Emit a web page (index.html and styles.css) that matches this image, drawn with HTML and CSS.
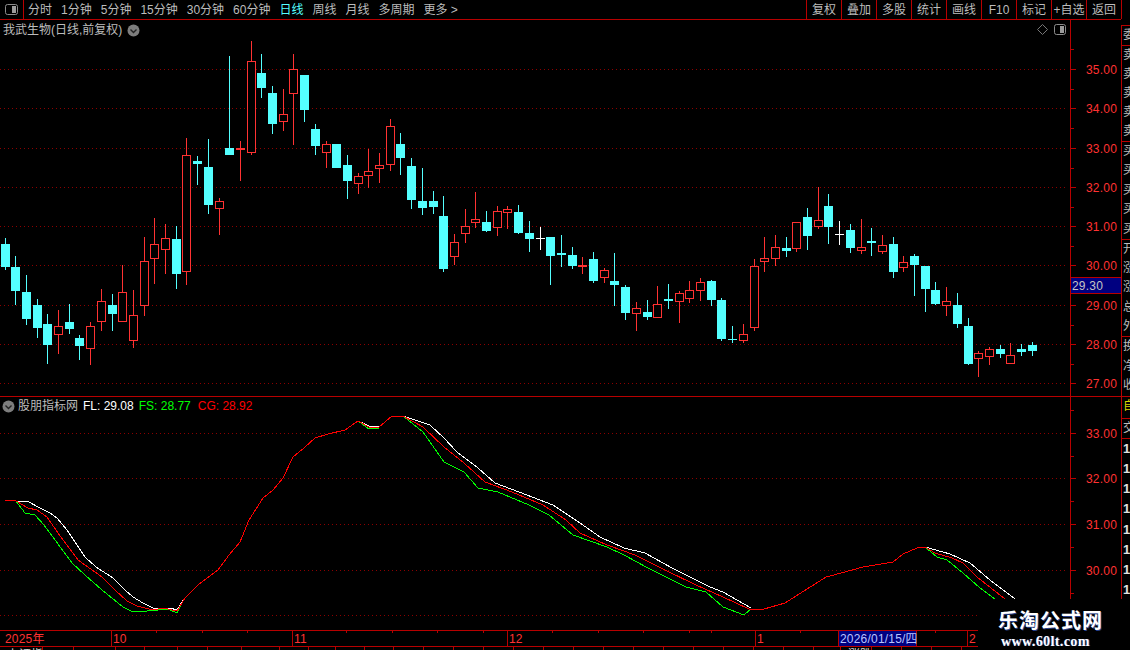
FILE: index.html
```html
<!DOCTYPE html>
<html lang="zh-CN">
<head>
<meta charset="utf-8">
<title>我武生物</title>
<link rel="stylesheet" href="styles.css">
</head>
<body>
<div class="app">
  <div class="main">
    <header class="topbar">
      <div class="layout-btn">
        <svg class="layout-icon" width="13" height="12" viewBox="0 0 13 12"><rect x="0.5" y="0.5" width="12" height="10" rx="2" fill="none" stroke="#8c8c8c"/><rect x="7" y="2" width="4" height="7" fill="#9c9c9c"/></svg>
      </div>
      <nav class="periods">
        <span>分时</span><span>1分钟</span><span>5分钟</span><span>15分钟</span><span>30分钟</span><span>60分钟</span><span class="on">日线</span><span>周线</span><span>月线</span><span>多周期</span><span>更多 &gt;</span>
      </nav>
      <nav class="tools">
        <span>复权</span><span>叠加</span><span>多股</span><span>统计</span><span>画线</span><span>F10</span><span>标记</span><span>+自选</span><span>返回</span>
      </nav>
    </header>

    <section class="pane pane-kline">
      <svg id="kline" class="plot" width="1121" height="376" viewBox="0 20 1121 376"></svg>
      <div class="pane-title">
        <span>我武生物(日线,前复权)</span>
        <svg width="13" height="13" viewBox="0 0 13 13"><circle cx="6.5" cy="6.5" r="6" fill="#7d7d7d"/><path d="M3.5 5.5 6.5 8.5 9.5 5.5" fill="none" stroke="#222" stroke-width="1.4"/></svg>
      </div>
      <div class="pane-icons">
        <svg width="11" height="11" viewBox="0 0 11 11"><path d="M5.5 .5 10.5 5.5 5.5 10.5 .5 5.5Z" fill="none" stroke="#777"/></svg>
        <svg width="13" height="12" viewBox="0 0 13 12"><rect x="0.5" y="0.5" width="11" height="10" rx="2" fill="none" stroke="#8c8c8c"/><rect x="6" y="2" width="4" height="7" fill="#9c9c9c"/></svg>
      </div>
    </section>

    <section class="pane pane-indicator">
      <svg id="indicator" class="plot" width="1121" height="233" viewBox="0 397 1121 233"></svg>
      <div class="pane-title ind-title">
        <svg width="13" height="13" viewBox="0 0 13 13"><circle cx="6.5" cy="6.5" r="6" fill="#7d7d7d"/><path d="M3.5 5.5 6.5 8.5 9.5 5.5" fill="none" stroke="#222" stroke-width="1.4"/></svg>
        <span class="ind-name">股朋指标网</span>
        <span class="fl">FL: 29.08</span>
        <span class="fs">FS: 28.77</span>
        <span class="cg">CG: 28.92</span>
      </div>
    </section>

    <svg id="timeaxis" class="plot" width="1121" height="17" viewBox="0 630 1121 17"></svg>
    <div id="statusbar" class="statusbar"></div>
  </div>

  <aside class="side">
    <div class="group g-top"><span>委</span></div>
    <div class="group g-five"><span>卖</span><span>卖</span><span>卖</span><span>卖</span><span>卖</span></div>
    <div class="group g-five g-buy"><span>买</span><span>买</span><span>买</span><span>买</span><span>买</span></div>
    <div class="group g-five g-quote"><span>开</span><span>涨</span><span>涨</span><span>总</span><span>外</span></div>
    <div class="group g-three"><span>换</span><span>净</span><span>收</span></div>
    <div class="group g-self"><span>自</span></div>
    <div class="group g-top g-trade"><span>交</span></div>
    <div class="group g-list"><span>1</span><span>1</span><span>1</span><span>1</span><span>1</span><span>1</span><span>1</span><span>1</span></div>
  </aside>

  <div class="watermark">
    <div class="wm-name">乐淘公式网</div>
    <div class="wm-url">www.60lt.com</div>
  </div>
</div>
<script src="chart.js"></script>
</body>
</html>
```

FILE: styles.css
```css
* { box-sizing: border-box; }
html, body { margin: 0; padding: 0; background: #000; }
body { width: 1130px; height: 650px; overflow: hidden; }

.app {
  position: relative;
  display: flex;
  width: 1130px;
  height: 650px;
  overflow: hidden;
  background: #000;
  color: #bcbcbc;
  font: 12px/14px "Liberation Sans", "Noto Sans CJK SC", sans-serif;
}
.main { display: flex; flex-direction: column; width: 1121px; height: 650px; }

.topbar {
  display: flex;
  align-items: center;
  flex: none;
  height: 20px;
  border-bottom: 1px solid #b80000;
}
.layout-btn {
  display: flex;
  align-items: center;
  justify-content: center;
  width: 24px;
  height: 19px;
  border-right: 1px solid #b80000;
}
.periods { display: flex; gap: 9px; margin-left: 4px; }
.periods .on { color: #55ffff; }
.tools { display: flex; height: 19px; margin-left: auto; margin-right: -1px; border-left: 1px solid #b80000; }
.tools span {
  display: flex;
  align-items: center;
  justify-content: center;
  width: 35px;
  border-right: 1px solid #b80000;
  white-space: nowrap;
}

.plot { display: block; flex: none; shape-rendering: crispEdges; }
.plot text { font: 12px "Liberation Sans", "Noto Sans CJK SC", sans-serif; letter-spacing: .2px; shape-rendering: auto; }

.pane { position: relative; flex: none; }
.pane-kline { height: 377px; border-bottom: 1px solid #b80000; }
.pane-indicator { height: 233px; }
.pane-title {
  position: absolute;
  top: 3px;
  left: 3px;
  display: flex;
  align-items: center;
  gap: 5px;
}
.ind-title { top: 2px; left: 2px; gap: 5px; }
.ind-name { margin-left: -2px; }
.fl { color: #fff; }
.fs { color: #00ff00; }
.cg { margin-left: 2px; color: #ff0000; }
.pane-icons {
  position: absolute;
  top: 4px;
  left: 1037px;
  display: flex;
  align-items: flex-start;
  gap: 6px;
}

.statusbar { display: flex; flex: none; height: 3px; overflow: hidden; }
.status-cell {
  flex: none;
  height: 3px;
  padding: 1px 0 0 7px;
  border-right: 1px solid #b80000;
  color: #d8d8d8;
  line-height: 14px;
  overflow: hidden;
  white-space: nowrap;
}

.side { display: flex; flex-direction: column; width: 9px; height: 650px; padding-top: 25px; }
.group {
  display: flex;
  flex-direction: column;
  flex: none;
  width: 9px;
  border-top: 1px solid #b80000;
  border-left: 1px solid #b80000;
  overflow: hidden;
}
.group span { flex: 1; padding-left: 1px; line-height: 19px; white-space: nowrap; }
.g-top { height: 20px; }
.g-five { height: 96px; }
.g-buy { height: 98px; }
.g-quote { height: 97px; }
.g-three { height: 60px; }
.g-self { height: 22px; color: #d8d800; }
.g-trade { height: 20px; }
.g-list { height: 162px; color: #e0e0e0; font-weight: 700; font-size: 13px; }

.watermark {
  position: absolute;
  left: 978px;
  top: 599px;
  width: 152px;
  height: 51px;
  padding: 9px 0 0 20px;
  background: #000;
  color: #fff;
  font-weight: 700;
}
.wm-name {
  font: 700 20px/24px "Noto Sans CJK SC", sans-serif;
  letter-spacing: 1px;
  text-shadow: 1px 1px 0 #27408b;
}
.wm-url {
  margin: 2px 0 0 3px;
  font: 700 14px/16px "Liberation Serif", serif;
  letter-spacing: .4px;
  text-shadow: 1px 0 0 #27408b;
}
```

FILE: chart.js
```javascript
var NS = 'http://www.w3.org/2000/svg';
var AXIS = '#b80000', GRID = '#8c0000', LABEL = '#ff3232', CYAN = '#54ffff';

function el(parent, name, attrs, text) {
  var node = document.createElementNS(NS, name);
  for (var key in attrs) node.setAttribute(key, attrs[key]);
  if (text !== undefined) node.textContent = text;
  parent.appendChild(node);
  return node;
}
function hline(svg, x1, x2, y, color, dash) {
  var attrs = { x1: x1, x2: x2, y1: y + .5, y2: y + .5, stroke: color };
  if (dash) attrs['stroke-dasharray'] = dash;
  el(svg, 'line', attrs);
}
function vline(svg, x, y1, y2, color) {
  el(svg, 'line', { x1: x + .5, x2: x + .5, y1: y1, y2: y2, stroke: color });
}

/* price axis: [y, label] pairs; y is a page coordinate */
function priceAxis(svg, ticks, top, bottom) {
  vline(svg, 1070, top, bottom, AXIS);
  ticks.forEach(function (t, i) {
    hline(svg, 0, 1067, t[0], GRID, '1 3');
    hline(svg, 1071, 1076, t[0], AXIS);
    el(svg, 'text', { x: 1086, y: t[0] + 5, fill: LABEL }, t[1]);
    if (i < ticks.length - 1) {
      hline(svg, 1071, 1074, Math.round((t[0] + ticks[i + 1][0]) / 2), AXIS);
    }
  });
}

/* [x, high, bodyTop, bodyBottom, low, kind]  c=cyan falling, r=red rising, w=white flat */
var CANDLES = [
  [5,238,244,267,270,'c'],[15,256,267,291,305,'c'],[26,275,292,319,325,'c'],[37,299,305,328,338,'c'],
  [47,314,324,345,364,'c'],[58,310,326,335,354,'r'],[69,304,322,329,334,'c'],[79,335,338,346,360,'c'],
  [90,322,326,349,365,'r'],[101,289,301,322,331,'r'],[112,294,305,314,331,'c'],[122,265,292,322,322,'r'],
  [133,290,315,341,348,'r'],[144,237,261,306,316,'r'],[154,218,244,259,284,'r'],[165,224,238,250,274,'r'],
  [176,226,239,274,289,'c'],[186,138,155,272,285,'r'],[197,156,161,164,185,'c'],[208,139,167,205,214,'c'],
  [219,198,201,209,235,'r'],[229,56,148,155,155,'c'],[240,141,148,150,181,'f'],[251,41,61,153,155,'r'],
  [261,54,73,88,98,'c'],[272,86,93,124,134,'c'],[283,89,114,122,131,'r'],[293,54,69,94,145,'r'],
  [304,75,75,110,122,'c'],[315,124,129,146,155,'c'],[326,141,144,153,168,'r'],[336,144,144,168,168,'c'],
  [347,155,165,181,199,'c'],[358,173,176,184,194,'r'],[368,149,171,176,188,'r'],[379,153,165,169,183,'r'],
  [390,119,126,165,171,'r'],[400,133,144,158,175,'c'],[411,158,166,200,209,'c'],[422,168,201,208,215,'c'],
  [433,191,201,207,214,'c'],[443,196,216,269,272,'c'],[454,234,242,257,265,'r'],[465,209,226,234,243,'r'],
  [475,192,219,223,228,'r'],[486,211,222,231,232,'c'],[497,206,211,228,236,'r'],[507,206,209,213,229,'r'],
  [518,205,212,233,234,'c'],[529,221,233,239,252,'c'],[540,227,238,239,250,'w'],[550,237,237,256,285,'c'],
  [561,235,253,255,267,'c'],[572,247,255,266,269,'c'],[582,257,265,267,274,'f'],[593,252,259,281,283,'c'],
  [604,268,270,278,283,'r'],[614,253,281,285,306,'c'],[625,285,287,313,320,'c'],[636,302,308,314,331,'r'],
  [647,300,312,317,320,'c'],[657,286,304,318,318,'r'],[668,284,299,301,309,'c'],[679,291,293,302,323,'r'],
  [689,281,290,299,303,'r'],[700,278,282,291,301,'r'],[711,280,281,300,306,'c'],[721,298,300,339,341,'c'],
  [732,326,339,340,343,'c'],[743,324,334,341,343,'r'],[754,259,266,328,331,'r'],[764,237,258,262,272,'r'],
  [775,235,247,259,266,'r'],[786,237,248,251,257,'c'],[796,222,222,249,252,'r'],[807,208,217,236,250,'c'],
  [818,187,220,227,229,'r'],[828,194,206,227,244,'c'],[839,221,234,235,245,'w'],[850,224,230,248,253,'c'],
  [861,219,247,251,254,'r'],[871,228,241,243,256,'c'],[882,235,245,252,254,'r'],[893,237,244,272,278,'c'],
  [903,256,262,268,272,'r'],[914,254,256,265,296,'c'],[925,266,266,289,312,'c'],[935,282,290,304,305,'c'],
  [946,287,301,306,316,'r'],[957,293,305,324,328,'c'],[968,318,326,364,365,'c'],[978,351,353,359,377,'r'],
  [989,347,349,357,365,'r'],[1000,345,349,354,358,'c'],[1010,343,355,364,364,'r'],[1021,344,349,352,356,'c'],
  [1032,342,345,351,356,'c']
];

function drawCandle(svg, c) {
  var x = c[0], high = c[1], top = c[2], bottom = c[3], low = c[4], kind = c[5];
  var color = kind === 'c' ? CYAN : kind === 'w' ? '#ffffff' : LABEL;
  if (high < top) vline(svg, x, high, top, color);
  if (low > bottom) vline(svg, x, bottom, low, color);
  if (kind === 'r') {
    el(svg, 'rect', { x: x - 3.5, y: top + .5, width: 8, height: bottom - top - 1, fill: '#000', stroke: color });
  } else {
    el(svg, 'rect', { x: x - 4, y: top, width: 9, height: Math.max(bottom - top, 1), fill: color });
  }
}

var kline = document.getElementById('kline');
priceAxis(kline, [[69,'35.00'],[108,'34.00'],[148,'33.00'],[187,'32.00'],[226,'31.00'],[265,'30.00'],[305,'29.00'],[344,'28.00'],[383,'27.00']], 20, 396);
hline(kline, 1071, 1074, 364, AXIS);
hline(kline, 1071, 1074, 49, AXIS);
CANDLES.forEach(function (c) { drawCandle(kline, c); });
el(kline, 'rect', { x: 1071, y: 277, width: 50, height: 17, fill: '#000080' });
hline(kline, 1071, 1121, 277, AXIS);
hline(kline, 1071, 1121, 293, AXIS);
el(kline, 'text', { x: 1072, y: 290, fill: '#c4c4c4' }, '29.30');

/* indicator curves */
var RED = '5,500 16,501 28,508 37,510 47,517 58,533 78,560 102,577 115,590 127,601 137,606 153,610 163,608 177,611 185,598 198,585 218,570 229,555 240,542 249,520 263,498 273,490 283,478 293,457 304,448 315,438 328,434 345,430 358,421 369,427 379,427 392,416 403,416 423,427 444,447 464,463 485,482 512,492 543,505 566,520 580,533 607,545 635,555 665,570 696,585 723,597 749,609 764,609 785,603 826,577 830,576 863,567 893,562 903,554 917,548 925,547 935,553 952,558 963,563 977,577 1005,599';
var WHITE = ['5,500 16,501 27,501 40,508 50,513 57,518 67,530 85,557 96,567 113,578 125,590 133,597 143,603 153,608 170,608 177,610 182,602 185,598',
  '358,421 369,426 379,427',
  '392,416 403,416 430,425 444,438 457,452 478,468 495,483 519,492 553,505 580,523 600,537 624,548 645,553 672,568 710,587 723,592 751,608',
  '925,547 950,554 970,563 990,580 1015,599'];
var GREEN = ['16,501 25,513 35,515 44,525 72,563 85,575 102,590 123,607 133,612 147,611 158,610 168,609 177,613 182,603 185,598',
  '358,421 369,429 379,428',
  '403,416 423,432 444,462 464,472 478,488 498,492 529,505 549,515 573,535 607,547 624,555 648,568 686,587 706,592 723,607 744,615 751,609',
  '925,547 937,557 947,560 963,573 980,588 995,599'];

var indicator = document.getElementById('indicator');
priceAxis(indicator, [[433,'33.00'],[478,'32.00'],[524,'31.00'],[570,'30.00'],[615,'']], 397, 630);
hline(indicator, 1071, 1074, 410, AXIS);
function curve(points, color) {
  el(indicator, 'polyline', { points: points, fill: 'none', stroke: color });
}
WHITE.forEach(function (p) { curve(p, '#ffffff'); });
GREEN.forEach(function (p) { curve(p, '#00ff00'); });
curve(RED, '#ff0000');

/* time axis */
var axis = document.getElementById('timeaxis');
hline(axis, 0, 1121, 630, AXIS);
hline(axis, 0, 1121, 646, AXIS);
[[111,'10'],[292,'11'],[507,'12'],[755,'1'],[967,'2']].forEach(function (m) {
  vline(axis, m[0], 630, 646, AXIS);
  el(axis, 'text', { x: m[0] + 2, y: 643, fill: LABEL }, m[1]);
});
el(axis, 'text', { x: 5, y: 643, fill: LABEL }, '2025年');
[156,202,247,346,392,437,483,552,598,643,689,711,800,845,890,935].forEach(function (x) {
  vline(axis, x, 630, 633, AXIS);
});
el(axis, 'rect', { x: 838, y: 631, width: 79, height: 15, fill: '#000080' });
vline(axis, 838, 631, 646, AXIS);
vline(axis, 916, 631, 646, AXIS);
el(axis, 'text', { x: 840, y: 643, fill: '#b8c4ff' }, '2026/01/15/四');

/* clipped status strip */
var bar = document.getElementById('statusbar');
var edges = [42,73,115,144,177,207,241,279,308,335,364,393,423,453,483,513,543,573,603,633,663,693,723,753,783,813,840,871,901,931,961,991];
var prev = -1;
edges.forEach(function (x, i) {
  var cell = document.createElement('div');
  cell.className = 'status-cell';
  cell.style.width = (x - prev) + 'px';
  if (i === 0) cell.textContent = '上证指数';
  if (x === 871) cell.textContent = '涨跌';
  bar.appendChild(cell);
  prev = x;
});
```
